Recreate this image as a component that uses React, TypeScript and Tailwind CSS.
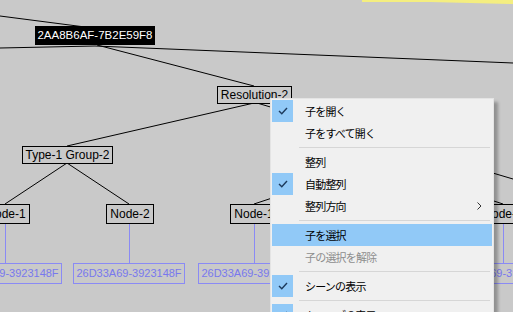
import React from "react";

const diag = { fontFamily: '"Liberation Sans", Arial, sans-serif' };
const jp = { fontFamily: '"Noto Sans CJK JP", "Noto Sans", sans-serif' };

function Check() {
  return (
    <div className="w-[21px] h-[22px] bg-[#91c9f7] flex items-center justify-center shrink-0">
      <svg width="10" height="8" viewBox="0 0 10 8">
        <polyline points="1,4 3.8,6.8 9,1" fill="none" stroke="#1d3a5c" strokeWidth="1.4" />
      </svg>
    </div>
  );
}

type Item = { label: string; check?: boolean; sub?: boolean; hl?: boolean; dis?: boolean } | "sep";

const items: Item[] = [
  { label: "子を開く", check: true },
  { label: "子をすべて開く" },
  "sep",
  { label: "整列" },
  { label: "自動整列", check: true },
  { label: "整列方向", sub: true },
  "sep",
  { label: "子を選択", hl: true },
  { label: "子の選択を解除", dis: true },
  "sep",
  { label: "シーンの表示", check: true },
  "sep",
  { label: "キューブの表示", check: true },
];

function Box({ left, top, w, text, h = 19 }: { left: number; top: number; w: number; text: string; h?: number }) {
  return (
    <div
      className="absolute border border-black bg-[#c9c9c9] flex items-center justify-center text-[12px] text-black leading-none whitespace-nowrap"
      style={{ left, top, width: w, height: h, ...diag }}
    >
      {text}
    </div>
  );
}

function Blue({ left }: { left: number }) {
  return (
    <div
      className="absolute border border-[#8a8af5] flex items-center justify-center text-[11px] text-[#7878ee] leading-none whitespace-nowrap"
      style={{ left, top: 263, width: 112, height: 21, ...diag }}
    >
      26D33A69-3923148F
    </div>
  );
}

export default function App() {
  return (
    <div className="relative w-[513px] h-[312px] overflow-hidden bg-[#c9c9c9]">
      <svg className="absolute left-0 top-0" width="513" height="312">
        <polygon points="362,0 513,0 513,4 430,2 362,2" fill="#f4ee80" />
        <g stroke="#000" strokeWidth="1" fill="none">
          <line x1="0" y1="16" x2="85" y2="27" />
          <polyline points="0,48 95,46 513,63" />
          <line x1="97" y1="45" x2="254" y2="86" />
          <line x1="254" y1="103" x2="67" y2="146" />
          <line x1="257" y1="103" x2="513" y2="179" />
          <line x1="67" y1="163" x2="5" y2="204" />
          <line x1="67" y1="163" x2="129" y2="204" />
          <line x1="378" y1="163" x2="254" y2="204" />
          <line x1="378" y1="163" x2="503" y2="204" />
        </g>
        <g stroke="#8a8af5" strokeWidth="1">
          <line x1="5.5" y1="223" x2="5.5" y2="263" />
          <line x1="129.5" y1="223" x2="129.5" y2="263" />
          <line x1="254.5" y1="223" x2="254.5" y2="263" />
          <line x1="503.5" y1="223" x2="503.5" y2="263" />
        </g>
      </svg>

      <div
        className="absolute left-[35px] top-[26px] w-[120px] h-[19px] bg-black text-white flex items-center justify-center text-[11.5px] leading-none whitespace-nowrap"
        style={diag}
      >
        2AA8B6AF-7B2E59F8
      </div>

      <Box left={217} top={86} w={75} h={18} text="Resolution-2" />
      <Box left={22} top={146} w={91} h={18} text="Type-1 Group-2" />
      <Box left={-18} top={204} w={48} h={20} text="Node-1" />
      <Box left={106} top={204} w={48} h={20} text="Node-2" />
      <Box left={230} top={204} w={48} h={20} text="Node-1" />
      <Box left={479} top={204} w={48} h={20} text="Node-2" />

      <Blue left={-50} />
      <Blue left={73} />
      <Blue left={198} />
      <Blue left={447} />

      <div
        className="absolute left-[270px] top-[98px] w-[224px] bg-[#f0f0f0] border border-[#e4e4e4] pt-[1px] px-[1px] shadow-[4px_4px_3px_rgba(0,0,0,0.28)]"
        style={jp}
      >
        {items.map((it, i) =>
          it === "sep" ? (
            <div key={i} className="h-[7px] flex items-center pl-[27px] pr-[2px]">
              <div className="h-px w-full bg-[#d6d6d6]" />
            </div>
          ) : (
            <div
              key={i}
              className={`h-[22px] flex items-center ${it.hl ? "bg-[#91c9f7]" : ""}`}
            >
              {it.check ? <Check /> : <div className="w-[21px] shrink-0" />}
              <span
                className={`ml-[12px] text-[11px] tracking-[-0.8px] leading-none ${it.dis ? "text-[#8d8d8d]" : "text-black"}`}
              >
                {it.label}
              </span>
              {it.sub && (
                <svg className="ml-auto mr-[10px]" width="5" height="8" viewBox="0 0 5 8">
                  <polyline points="0.5,0.5 4,4 0.5,7.5" fill="none" stroke="#333" strokeWidth="1" />
                </svg>
              )}
            </div>
          )
        )}
      </div>
    </div>
  );
}
